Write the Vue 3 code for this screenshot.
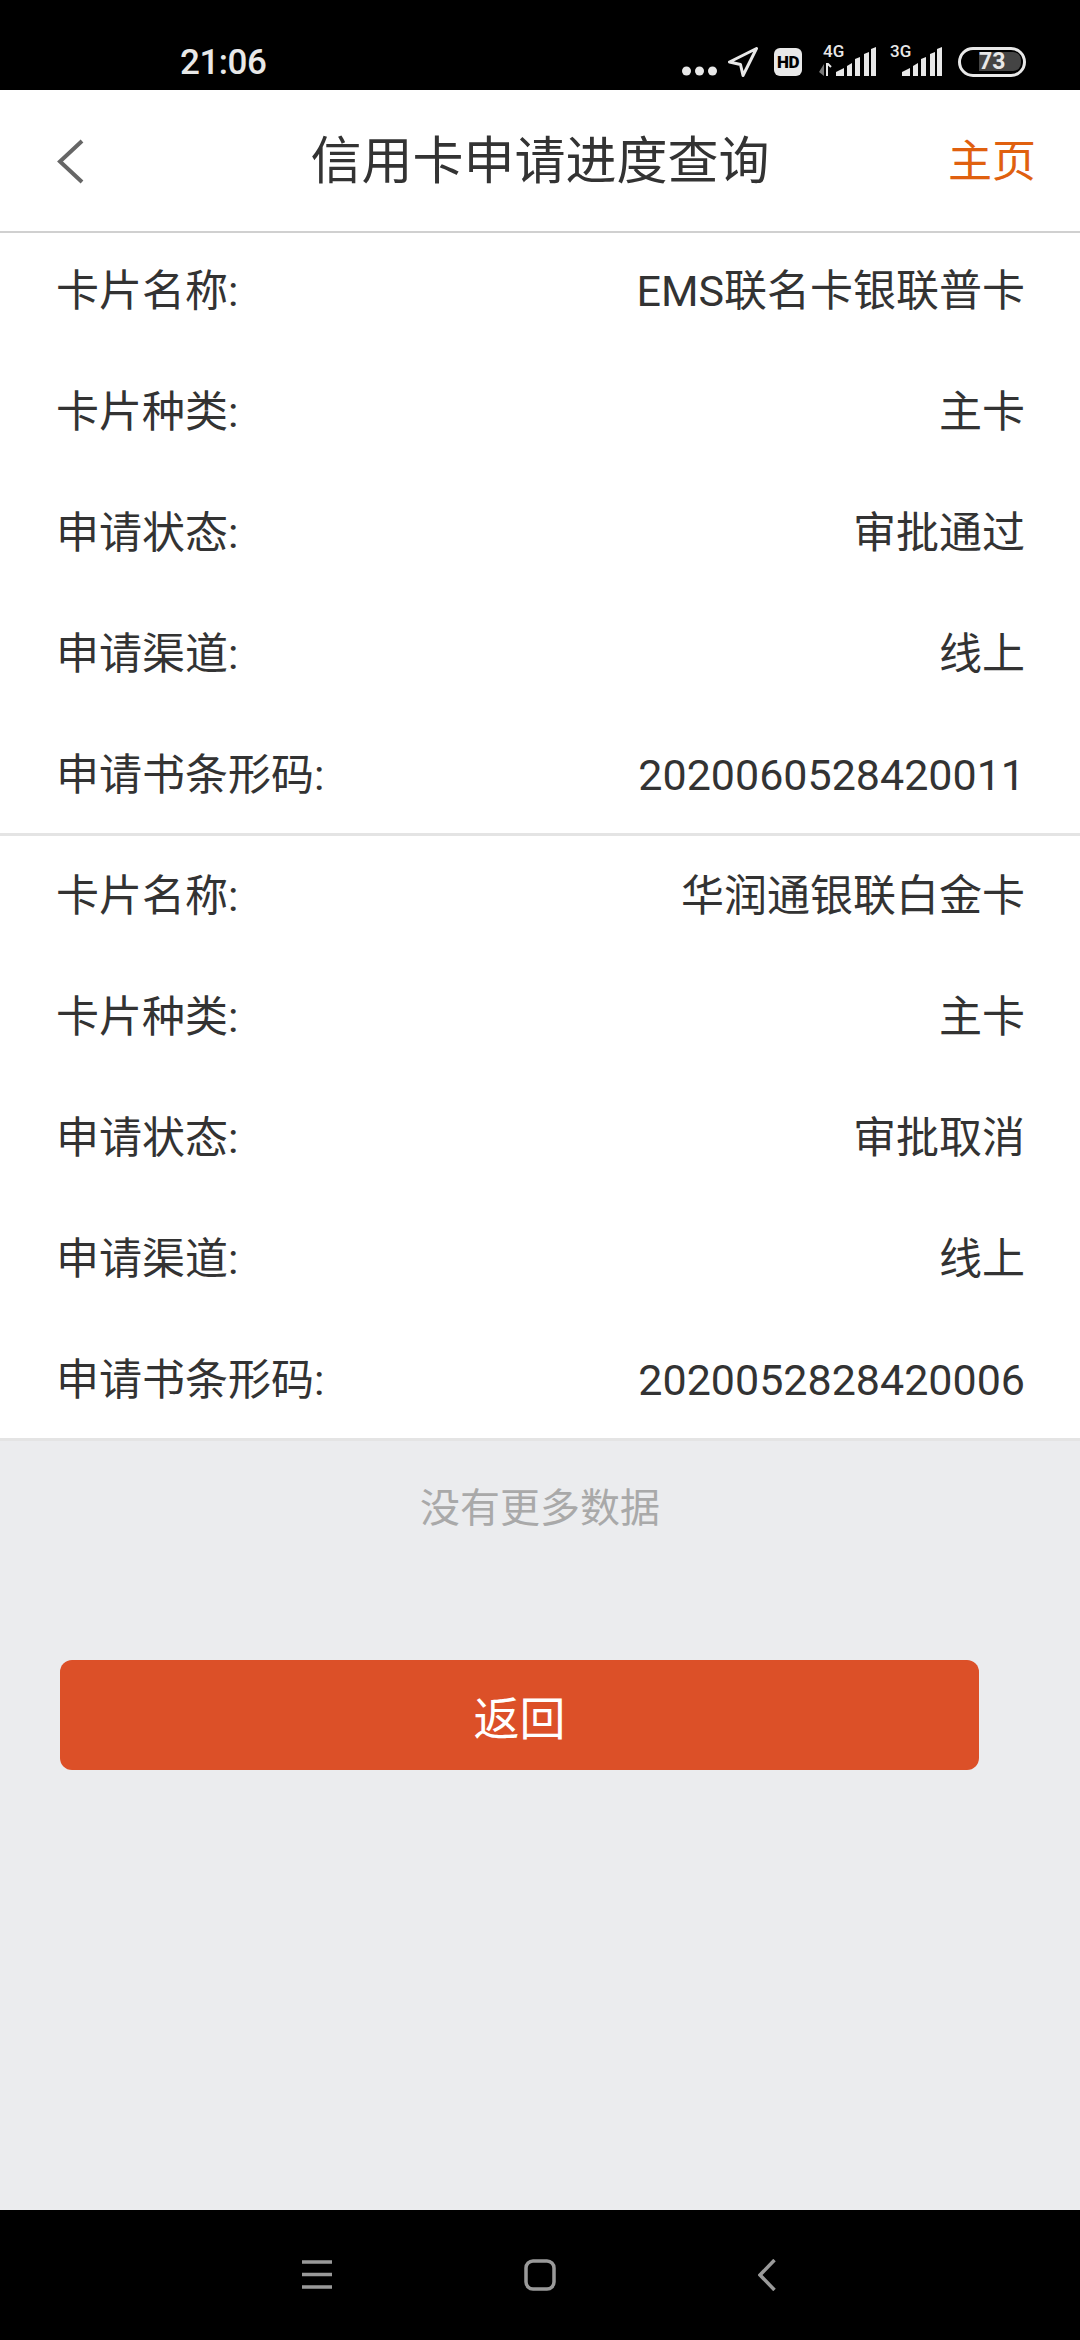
<template>
  <div class="phone">
    <div class="status-bar">
      <span class="time">21:06</span>
      <div class="status-icons">
        <svg width="35" height="10" viewBox="0 0 35 10" class="dots">
          <circle cx="4.5" cy="5" r="4.5" />
          <circle cx="17.5" cy="5" r="4.5" />
          <circle cx="30.5" cy="5" r="4.5" />
        </svg>
        <svg width="30" height="30" viewBox="0 0 30 30" class="nav-arrow">
          <path d="M28.5 1.5 L1.5 15 L12.5 17.5 L15 28.5 Z" />
        </svg>
        <span class="hd">HD</span>
        <div class="signal">
          <span class="net">4G</span>
          <svg width="13" height="13" viewBox="0 0 13 13" class="updown">
            <path d="M5 1 L5 13 L0 9 Z" fill="#777" />
            <path d="M8 13 L8 0 L12 4" fill="none" stroke="#e8e8e8" stroke-width="2" />
          </svg>
          <svg width="40" height="29" viewBox="0 0 40 29" class="bars">
            <path d="M0 29 L0 25 L8 21 L8 29 Z" />
            <path d="M11 29 L11 19 L16 16 L16 29 Z" />
            <path d="M19 29 L19 12 L24 10 L24 29 Z" />
            <path d="M28 29 L28 7 L33 5 L33 29 Z" />
            <path d="M35 29 L35 2 L40 0 L40 29 Z" />
          </svg>
        </div>
        <div class="signal second">
          <span class="net">3G</span>
          <svg width="40" height="29" viewBox="0 0 40 29" class="bars">
            <path d="M0 29 L0 25 L8 21 L8 29 Z" />
            <path d="M11 29 L11 19 L16 16 L16 29 Z" />
            <path d="M19 29 L19 12 L24 10 L24 29 Z" />
            <path d="M28 29 L28 7 L33 5 L33 29 Z" />
            <path d="M35 29 L35 2 L40 0 L40 29 Z" />
          </svg>
        </div>
        <div class="battery">
          <div class="battery-fill">73</div>
        </div>
      </div>
    </div>

    <header class="top-bar">
      <svg class="back" width="28" height="46" viewBox="0 0 28 46">
        <path d="M25 3 L3 23.5 L25 44" />
      </svg>
      <h1 class="title">信用卡申请进度查询</h1>
      <span class="home">主页</span>
    </header>

    <main class="content">
      <section v-for="(card, i) in cards" :key="i" class="card">
        <div v-for="row in card" :key="row[0]" class="row">
          <span>{{ row[0] }}:</span>
          <span>{{ row[1] }}</span>
        </div>
      </section>
      <p class="no-more">没有更多数据</p>
      <button class="return-btn">返回</button>
    </main>

    <footer class="nav-bar">
      <svg width="30" height="30" viewBox="0 0 30 30" class="nav-icon menu">
        <path d="M0 2 H30 M0 14.5 H30 M0 27 H30" />
      </svg>
      <svg width="32" height="32" viewBox="0 0 32 32" class="nav-icon square">
        <rect x="2" y="2" width="28" height="28" rx="7" />
      </svg>
      <svg width="18" height="32" viewBox="0 0 18 32" class="nav-icon">
        <path d="M16.5 1 L2 16 L16.5 31" />
      </svg>
    </footer>
  </div>
</template>

<script setup>
const cards = [
  [
    ["卡片名称", "EMS联名卡银联普卡"],
    ["卡片种类", "主卡"],
    ["申请状态", "审批通过"],
    ["申请渠道", "线上"],
    ["申请书条形码", "2020060528420011"],
  ],
  [
    ["卡片名称", "华润通银联白金卡"],
    ["卡片种类", "主卡"],
    ["申请状态", "审批取消"],
    ["申请渠道", "线上"],
    ["申请书条形码", "2020052828420006"],
  ],
];
</script>

<style>
html,
body {
  margin: 0;
  background: #000;
}
</style>

<style scoped>
.phone {
  width: 1080px;
  height: 2340px;
  display: flex;
  flex-direction: column;
  font-family: Roboto, "Noto Sans CJK SC", sans-serif;
  overflow: hidden;
}

.status-bar {
  height: 90px;
  flex: none;
  background: #000;
  color: #e8e8e8;
  display: flex;
  align-items: flex-end;
  justify-content: space-between;
  padding: 0 54px 13px 180px;
  box-sizing: border-box;
}
.time {
  font-size: 35px;
  font-weight: 500;
  line-height: 40px;
  letter-spacing: -0.5px;
  margin-bottom: -6px;
}
.status-icons {
  display: flex;
  align-items: flex-end;
}
.dots {
  fill: #e8e8e8;
  margin-right: 11px;
  margin-bottom: 1px;
}
.nav-arrow {
  fill: none;
  stroke: #e8e8e8;
  stroke-width: 3;
  stroke-linejoin: round;
  margin-right: 16px;
}
.hd {
  width: 28px;
  height: 28px;
  background: #e8e8e8;
  border-radius: 6px;
  color: #000;
  font-size: 17px;
  font-weight: 900;
  line-height: 28px;
  letter-spacing: -0.5px;
  text-align: center;
  margin-right: 17px;
  margin-bottom: 1px;
}
.signal {
  position: relative;
  height: 29px;
  margin-bottom: 1px;
  margin-right: 26px;
  display: flex;
  align-items: flex-end;
  justify-content: flex-end;
  gap: 4px;
}
.signal.second {
  margin-right: 16px;
}
.bars {
  fill: #e8e8e8;
}
.net {
  position: absolute;
  left: 4px;
  top: -4px;
  font-size: 17px;
  font-weight: 500;
  line-height: 16px;
}
.signal.second .net {
  left: -12px;
}
.battery {
  width: 68px;
  height: 30px;
  border: 3px solid #e8e8e8;
  border-radius: 15px;
  box-sizing: border-box;
  padding: 2px 2px 3px 18px;
}
.battery-fill {
  height: 100%;
  background: #444;
  border-radius: 0 8px 8px 0;
  color: #e8e8e8;
  font-size: 23px;
  font-weight: 700;
  line-height: 19px;
}

.top-bar {
  height: 143px;
  flex: none;
  background: #fff;
  border-bottom: 2px solid #d0d0d0;
  box-sizing: border-box;
  padding-top: 2px;
  position: relative;
  display: flex;
  align-items: center;
  justify-content: center;
}
.back {
  position: absolute;
  left: 57px;
  top: 48px;
  fill: none;
  stroke: #666;
  stroke-width: 4;
}
.title {
  margin: 0;
  font-size: 51px;
  font-weight: 400;
  color: #333;
  line-height: 1;
}
.home {
  position: absolute;
  right: 44px;
  top: 50px;
  font-size: 44px;
  color: #e0600f;
  line-height: 1;
}

.content {
  flex: 1;
  background: #ebecee;
  display: flex;
  flex-direction: column;
}
.card {
  background: #fff;
  border-bottom: 3px solid #e4e4e4;
}
.card + .card {
  padding-top: 2px;
}
.row {
  padding: 0 55px 5px 56px;
  display: flex;
  justify-content: space-between;
  font-size: 43px;
  line-height: 116px;
  color: #333;
}
.row:last-child {
  padding-bottom: 0;
}
.no-more {
  margin: 0;
  height: 127px;
  display: flex;
  align-items: center;
  justify-content: center;
  font-size: 40px;
  color: #a9a9a9;
}
.return-btn {
  margin: 92px 0 0 60px;
  width: 919px;
  height: 110px;
  background: #dc5028;
  border: none;
  border-radius: 12px;
  color: #fff;
  font-family: inherit;
  font-size: 46px;
}

.nav-bar {
  height: 130px;
  flex: none;
  background: #000;
  display: flex;
  align-items: center;
  padding-left: 302px;
}
.nav-icon {
  fill: none;
  stroke: #9a9a9a;
  stroke-width: 3.5;
}
.menu {
  margin-right: 192px;
}
.square {
  margin-right: 202px;
}
</style>
